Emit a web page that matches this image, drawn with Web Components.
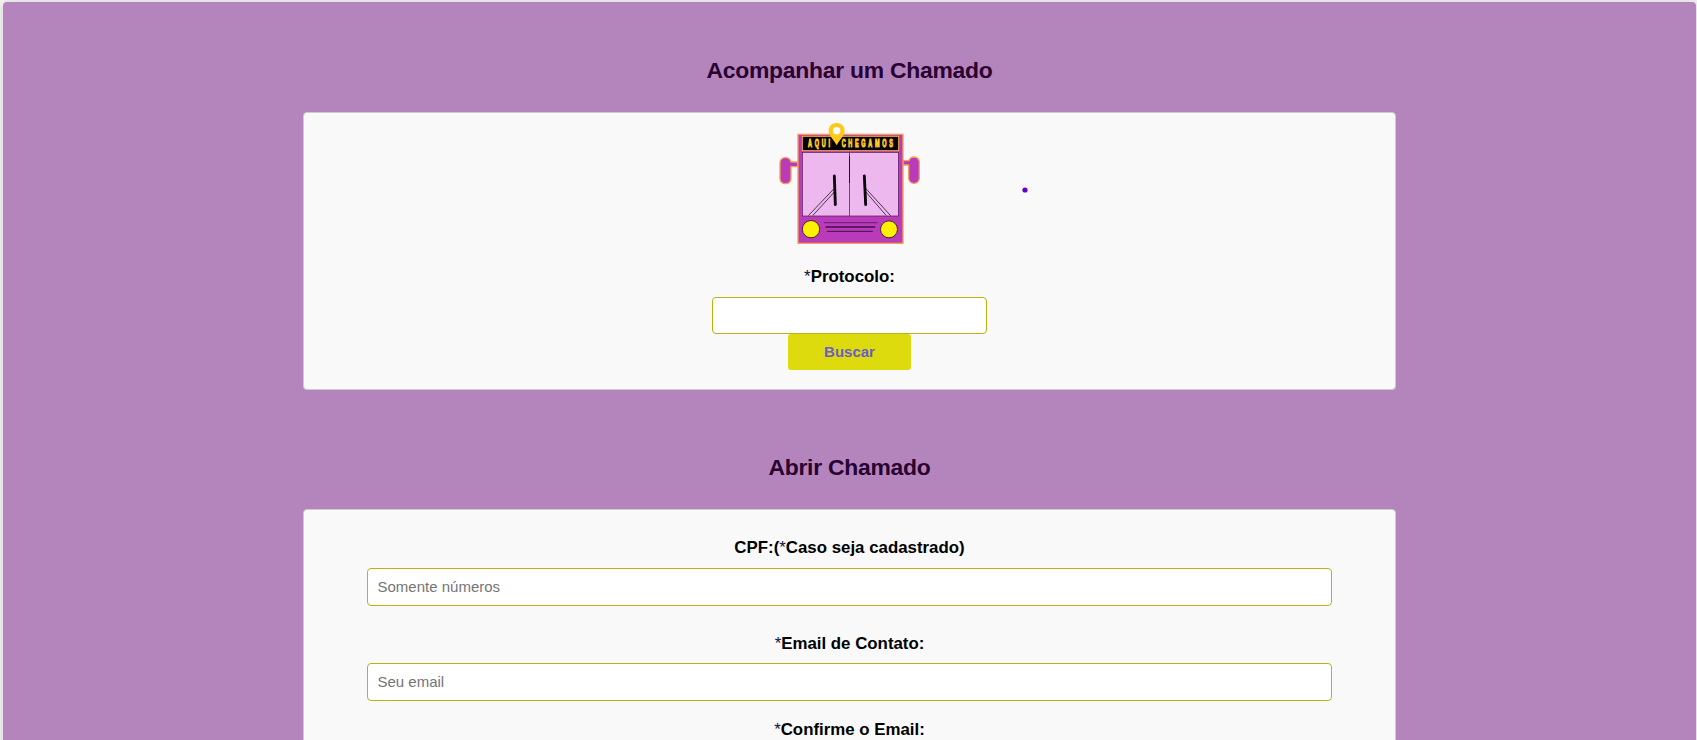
<!DOCTYPE html>
<html lang="pt-BR">
<head>
<meta charset="utf-8">
<title>Chamados</title>
<style>
html,body{margin:0;height:740px;overflow:hidden}
body{background:#f4f4f4;font-family:"Liberation Sans",Arial,sans-serif;color:#000}
</style>
</head>
<body>
<support-page>
  <ticket-section heading="Acompanhar um Chamado" class="first">
    <bus-logo></bus-logo>
    <form-field class="search" label="*Protocolo:"></form-field>
    <action-button>Buscar</action-button>
    <cursor-dot></cursor-dot>
  </ticket-section>
  <ticket-section heading="Abrir Chamado" class="open">
    <form-field class="cpf" label="CPF:(*Caso seja cadastrado)" placeholder="Somente números"></form-field>
    <form-field class="email" label="*Email de Contato:" placeholder="Seu email"></form-field>
    <form-field class="confirm" label="*Confirme o Email:"></form-field>
  </ticket-section>
</support-page>
<script>
const define = (name, html, setup) => customElements.define(name, class extends HTMLElement {
  connectedCallback() {
    if (this.shadowRoot) return;
    const root = this.attachShadow({mode: 'open'});
    root.innerHTML = html;
    if (setup) setup(this, root);
  }
});

define('support-page', `<style>
:host{display:block;box-sizing:border-box;margin:0 1px 0 3px;height:740px;padding-top:2px}
main{box-sizing:border-box;height:900px;padding-top:54px;background:#b485bc;border-radius:4px;box-shadow:0 0 10px rgba(0,0,0,.15);display:flex;flex-direction:column;align-items:center;gap:63px}
</style><main><slot></slot></main>`);

define('ticket-section', `<style>
:host{display:block;width:1093px}
h2{margin:0 0 28px;font-size:22.9px;letter-spacing:-.25px;line-height:28px;font-weight:bold;text-align:center;color:#280032}
.card{position:relative;box-sizing:border-box;background:#f9f9f9;border:1px solid #ccc;border-radius:4px;display:flex;flex-direction:column;align-items:center}
:host(.first) .card{height:278px}
:host(.open) .card{padding:28px 63px 60px}
</style><h2></h2><div class="card"><slot></slot></div>`,
(el, root) => root.querySelector('h2').textContent = el.getAttribute('heading'));

define('form-field', `<style>
:host{display:block;width:965px;text-align:center}
:host(.search){width:275px;margin-top:15px}
:host(.email){margin-top:28px}
:host(.confirm){margin-top:19px}
label{display:block;font-size:16.85px;line-height:20px;font-weight:bold;margin-bottom:10px}
:host(.email) label{margin-bottom:9px}
label span{font-weight:normal;color:#10103c}
input{display:block;box-sizing:border-box;width:100%;height:38px;margin:0;padding:0 9px 2px 9.5px;border:1px solid #b8b512;border-radius:4px;background:#fff;font:15px "Liberation Sans",Arial,sans-serif;outline:0}
:host(.search) input{height:37px}
input::placeholder{color:#757575;opacity:1}
</style><label for="f"></label><input id="f" type="text">`,
(el, root) => {
  root.querySelector('label').innerHTML = el.getAttribute('label').replace('*', '<span>*</span>');
  root.querySelector('input').placeholder = el.getAttribute('placeholder') || '';
});

define('action-button', `<style>
:host{display:block}
button{display:block;width:123px;height:36px;padding:0 0 2px;border:0;border-radius:3px;background:#dddb0d;color:#6a5fc6;font:bold 15px "Liberation Sans",Arial,sans-serif}
</style><button type="button"><slot></slot></button>`);

define('cursor-dot', `<style>
:host{position:absolute;left:718px;top:74px;width:6px;height:6px}
svg{display:block}
</style><svg width="6" height="6"><circle cx="3" cy="3" r="2.6" fill="#6200d0"/></svg>`);

define('bus-logo', `<style>:host{display:block}svg{display:block}</style>
<svg width="161" height="139" viewBox="-3 3 483 417">
  <g stroke="#f3a152" stroke-width="4" fill="#b93bb9">
    <path d="M58 150H84V164H58z"/><rect x="30" y="137" width="33" height="78" rx="15"/>
    <path d="M398 146H420V159H398z"/><rect x="416" y="135" width="32" height="79" rx="15"/>
    <path d="M58 152h10v10H58z" stroke="none"/><path d="M412 148h10v9h-10z" stroke="none"/>
    <rect x="84" y="67" width="315" height="327"/>
  </g>
  <rect x="97" y="73" width="289" height="43" fill="#050203" stroke="#f7a93f" stroke-width="3"/>
  <rect x="97" y="121" width="288" height="191" fill="#edb8ee" stroke="#4b174e" stroke-width="2"/>
  <path d="M238.500 121V312" stroke="#5d2c60" stroke-width="2.500"/><path d="M238.500 132V213" stroke="#2b0c2d" stroke-width="3"/>
  <g fill="none" stroke="#4d354f" stroke-width="3">
    <path d="M193 229L115 311M193 240L128 311M284 226L362 311M286 238L349 311"/>
  </g>
  <path d="M193 192L196 278M283 192L287 278" stroke="#09000b" stroke-width="8.500" stroke-linecap="round"/>
  <g stroke="#431148" stroke-linecap="round">
    <path d="M163 332H321" stroke-width="4" stroke="#74247b"/><path d="M168 345H314" stroke-width="4"/><path d="M172 358H307" stroke-width="3"/>
  </g>
  <g fill="#fff000" stroke="#492044" stroke-width="3"><circle cx="123" cy="351.500" r="26"/><circle cx="357" cy="352" r="25.500"/></g>
  <g fill="#ffc62b" stroke="#ffc62b" stroke-width="3" font-family="Liberation Sans" font-weight="bold" font-size="30">
    <text transform="translate(114 105) scale(.55 1)" textLength="120">AQUI</text>
    <text transform="translate(215 105) scale(.55 1)" textLength="279">CHEGAMOS</text>
  </g>
  <path fill="#ffc91a" d="M200 33C186 33 176 43 176 56C176 72 191 81 200 100C209 81 224 72 224 56C224 43 214 33 200 33z"/>
  <circle cx="200" cy="56" r="11" fill="#fff"/>
</svg>`);
</script>
</body>
</html>
